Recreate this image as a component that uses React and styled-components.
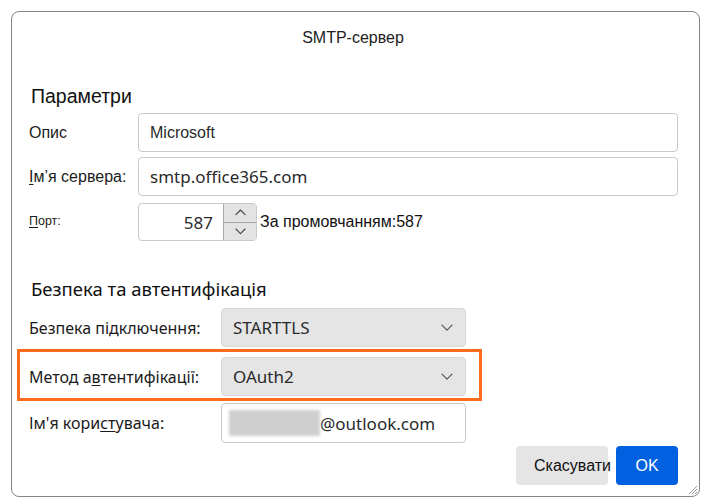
import React from "react";
import styled, { createGlobalStyle } from "styled-components";

const Global = createGlobalStyle`
  html, body { margin: 0; padding: 0; background: #ffffff; }
  body { font-family: "Liberation Sans", Arial, sans-serif; color: #1b1b1b; }
  * { box-sizing: border-box; }
`;

const Page = styled.div`
  padding: 11px 0 0 11px;
`;

const Dialog = styled.div`
  position: relative;
  width: 689px;
  height: 486px;
  border: 1px solid #858585;
  border-radius: 8px;
  background: #fff;
  display: flex;
  flex-direction: column;
`;

const Title = styled.div`
  height: 52px;
  display: flex;
  align-items: center;
  justify-content: center;
  padding-right: 5px;
  font-size: 16px;
  color: #222;
`;

const Heading = styled.div`
  margin: ${(p) => p.$top}px 0 0 ${(p) => p.$left}px;
  height: 20px;
  line-height: 20px;
  font-family: ${(p) => (p.$segoe ? '"Noto Sans", sans-serif' : '"Liberation Sans", Arial, sans-serif')};
  font-size: ${(p) => p.$size}px;
  color: #111;
`;

const FormGrid = styled.div`
  margin: 7px 0 0 17px;
  display: grid;
  grid-template-columns: 109px 540px;
  row-gap: 5px;
  align-items: center;
`;

const Label = styled.label`
  font-family: ${(p) => (p.$segoe ? '"Noto Sans", sans-serif' : '"Liberation Sans", Arial, sans-serif')};
  font-size: ${(p) => p.$size || 16}px;
  color: #1b1b1b;
  white-space: nowrap;
  u { text-decoration-thickness: 1px; text-underline-offset: 2px; }
`;

const TextBox = styled.div`
  height: ${(p) => p.$h || 39}px;
  border: 1px solid #c9c9c9;
  border-radius: 4px;
  background: #fff;
  display: flex;
  align-items: center;
  padding-left: ${(p) => p.$pad ?? 11}px;
  font-family: ${(p) => (p.$arial ? '"Liberation Sans", Arial, sans-serif' : '"Noto Sans", sans-serif')};
  font-size: ${(p) => p.$size || 17}px;
  color: #2a2a2a;
  white-space: nowrap;
  overflow: hidden;
`;

const PortRow = styled.div`
  display: flex;
  align-items: center;
  margin-top: 2px;
`;

const PortBox = styled.div`
  width: 119px;
  height: 38px;
  border: 1px solid #c9c9c9;
  border-radius: 4px;
  display: flex;
  overflow: hidden;
`;

const PortValue = styled.div`
  flex: 1;
  display: flex;
  align-items: center;
  justify-content: flex-end;
  padding-right: 10px;
  font-family: "Noto Sans", sans-serif;
  font-size: 17px;
  color: #2a2a2a;
`;

const Spinner = styled.div`
  width: 33px;
  display: flex;
  flex-direction: column;
  border-left: 1px solid #a8a8a8;
`;

const SpinBtn = styled.div`
  flex: 1;
  background: #e3e3e3;
  display: flex;
  align-items: center;
  justify-content: center;
  border-top: ${(p) => (p.$bottom ? "1px solid #a8a8a8" : "none")};
`;

const DefaultText = styled.span`
  margin-left: 3px;
  font-size: 16px;
  color: #111;
`;

const SecBlock = styled.div`
  margin-top: 9px;
  display: flex;
  flex-direction: column;
  gap: 2px;
`;

const SecRow = styled.div`
  display: grid;
  grid-template-columns: 192px 245px;
  align-items: center;
  padding-left: ${(p) => p.$pad ?? 17}px;
`;

const Highlight = styled.div`
  margin-left: 5px;
  width: 465px;
  height: 52px;
  border: 3px solid #fd6c1c;
  padding-top: 5px;
`;

const Select = styled.div`
  height: 39px;
  border: 1px solid #d9d9d9;
  border-radius: 4px;
  background: #e5e5e5;
  display: flex;
  align-items: center;
  justify-content: space-between;
  padding: 0 12px 0 11px;
  font-family: "Noto Sans", sans-serif;
  font-size: 17px;
  color: #2a2a2a;
`;

const Blur = styled.span`
  display: inline-block;
  width: 91px;
  height: 26px;
  margin-left: -3px;
  background: #cfcfcf;
  filter: blur(1.5px);
`;

const Buttons = styled.div`
  margin: 3px 21px 0 0;
  display: flex;
  justify-content: flex-end;
  gap: 8px;
`;

const Button = styled.button`
  height: 39px;
  width: ${(p) => p.$w}px;
  border: none;
  border-radius: 4px;
  padding: 0 0 0 ${(p) => p.$pl}px;
  display: flex;
  align-items: center;
  justify-content: ${(p) => (p.$primary ? "center" : "flex-start")};
  background: ${(p) => (p.$primary ? "#0061e0" : "#e5e5e5")};
  color: ${(p) => (p.$primary ? "#fff" : "#111")};
  font-family: "Liberation Sans", Arial, sans-serif;
  font-size: 16px;
  white-space: nowrap;
  overflow: visible;
`;

const Grip = styled.svg`
  position: absolute;
  right: 1px;
  bottom: 1px;
`;

const Chevron = ({ up, w = 12, color = "#555" }) => (
  <svg width={w} height={w * 0.6} viewBox="0 0 12 7" fill="none">
    <path
      d={up ? "M1 6L6 1L11 6" : "M1 1L6 6L11 1"}
      stroke={color}
      strokeWidth="1.2"
      strokeLinecap="round"
      strokeLinejoin="round"
    />
  </svg>
);

export default function App() {
  return (
    <>
      <Global />
      <Page>
        <Dialog>
          <Title>SMTP-сервер</Title>
          <Heading $top={22} $left={19} $size={19.5}>
            Параметри
          </Heading>
          <FormGrid>
            <Label>Опис</Label>
            <TextBox $arial $size={16}>Microsoft</TextBox>
            <Label>
              <u>І</u>м’я сервера:
            </Label>
            <TextBox>smtp.office365.com</TextBox>
            <Label $size={12.5}>
              <u>П</u>орт:
            </Label>
            <PortRow>
              <PortBox>
                <PortValue>587</PortValue>
                <Spinner>
                  <SpinBtn>
                    <Chevron up w={11} color="#444" />
                  </SpinBtn>
                  <SpinBtn $bottom>
                    <Chevron w={11} color="#444" />
                  </SpinBtn>
                </Spinner>
              </PortBox>
              <DefaultText>За промовчанням:587</DefaultText>
            </PortRow>
          </FormGrid>

          <Heading $top={38} $left={19} $size={18.5} $segoe>
            Безпека та автентифікація
          </Heading>
          <SecBlock>
            <SecRow>
              <Label $segoe>Безпека підключення:</Label>
              <Select>
                <span>STARTTLS</span>
                <Chevron w={12} />
              </Select>
            </SecRow>
            <Highlight>
              <SecRow $pad={9}>
                <Label $segoe>
                  Метод а<u>в</u>тентифікації:
                </Label>
                <Select>
                  <span>OAuth2</span>
                  <Chevron w={12} />
                </Select>
              </SecRow>
            </Highlight>
            <SecRow>
              <Label $segoe>
                Ім'я кори<u>ст</u>увача:
              </Label>
              <TextBox $h={40} $pad={10}>
                <Blur />
                @outlook.com
              </TextBox>
            </SecRow>
          </SecBlock>
          <Buttons>
            <Button $w={92} $pl={18}>
              Скасувати
            </Button>
            <Button $w={62} $pl={0} $primary>
              OK
            </Button>
          </Buttons>
          <Grip width="11" height="11" viewBox="0 0 11 11">
            <path d="M10 2L2 10M10 5L5 10M10 8L8 10" stroke="#9a9a9a" strokeWidth="1" />
          </Grip>
        </Dialog>
      </Page>
    </>
  );
}
